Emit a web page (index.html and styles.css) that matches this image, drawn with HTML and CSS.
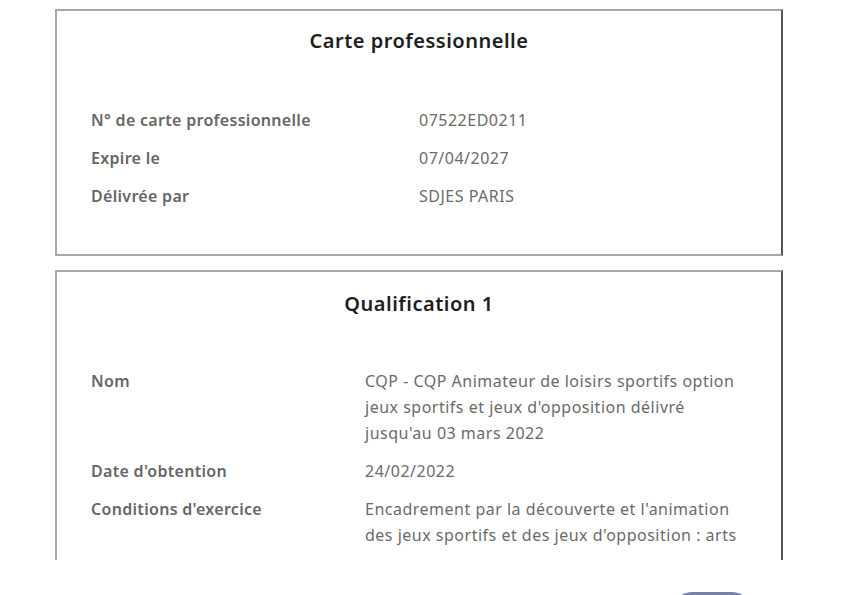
FILE: index.html
```html
<html>
  <head>
    <link rel="stylesheet" href="styles.css">
  </head>
  <body>
    <div class="page">
      <div class="content">
        <div class="card">
          <h2>Carte professionnelle</h2>
          <div class="rows half">
            <div class="lbl">N° de carte professionnelle</div>
            <div class="val">07522ED0211</div>
            <div class="lbl">Expire le</div>
            <div class="val">07/04/2027</div>
            <div class="lbl">Délivrée par</div>
            <div class="val">SDJES PARIS</div>
          </div>
        </div>
        <div class="card">
          <h2>Qualification 1</h2>
          <div class="rows wide">
            <div class="lbl">Nom</div>
            <div class="val">CQP - CQP Animateur de loisirs sportifs option jeux sportifs et jeux d'opposition délivré jusqu'au 03 mars 2022</div>
            <div class="lbl">Date d'obtention</div>
            <div class="val">24/02/2022</div>
            <div class="lbl">Conditions d'exercice</div>
            <div class="val">Encadrement par la découverte et l'animation des jeux sportifs et des jeux d'opposition : arts</div>
          </div>
        </div>
      </div>
      <div class="footer">
        <button class="btn"></button>
      </div>
    </div>
  </body>
</html>
```

FILE: styles.css
```css
*{
  margin: 0px;
  padding: 0px;
  box-sizing: border-box;
}
body{
  background: #fff;
  font-family: "Noto Sans", sans-serif;
  color: #666;
}
.page{
  height: 595px;
  display: flex;
  flex-direction: column;
  overflow: hidden;
}
.content{
  height: 560px;
  flex-shrink: 0;
  overflow: hidden;
  padding: 9px 58px 0 55px;
  display: flex;
  flex-direction: column;
  gap: 14px;
}
.card{
  border: 2px solid #a8a8a8;
  border-right-color: #555;
  padding: 18px 34px 45px 34px;
  flex-shrink: 0;
}
h2{
  text-align: center;
  font-size: 20px;
  font-weight: 600;
  letter-spacing: 0.5px;
  color: #1e1e1e;
  line-height: 24px;
  margin-bottom: 54px;
}
.card + .card h2{
  margin-top: 2px;
  margin-bottom: 52px;
}
.rows{
  display: grid;
  row-gap: 12px;
  font-size: 16px;
  letter-spacing: 0.5px;
  line-height: 26px;
}
.half{
  grid-template-columns: 1fr 1fr;
}
.wide{
  grid-template-columns: 274px 1fr;
}
.lbl{
  font-weight: 600;
  letter-spacing: 0.3px;
  color: #666;
}
.val{
  color: #6a6a6a;
}
.footer{
  flex: 1;
  overflow: hidden;
  display: flex;
  justify-content: flex-end;
  align-items: flex-start;
  padding: 32px 89px 0 0;
}
.btn{
  width: 80px;
  height: 40px;
  border: none;
  border-radius: 20px;
  background: #7a80aa;
}
```
